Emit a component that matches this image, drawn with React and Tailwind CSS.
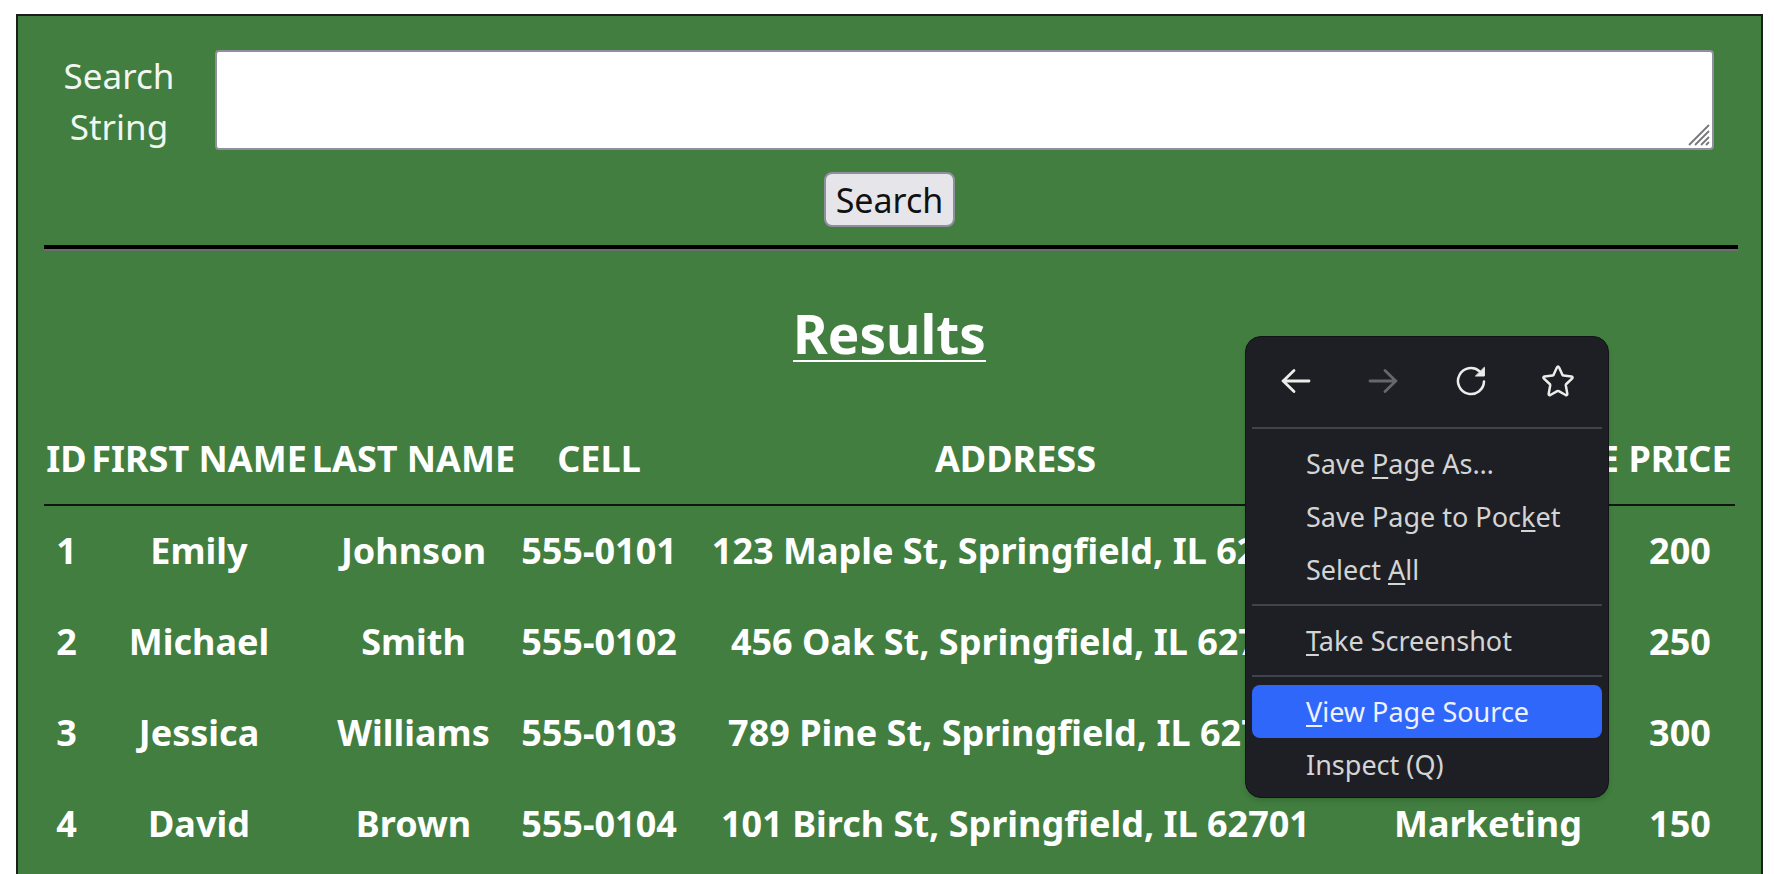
import React from "react";

const people = [
  { id: 1, first: "Emily", last: "Johnson", cell: "555-0101", address: "123 Maple St, Springfield, IL 62701", service: "Marketing", price: 200 },
  { id: 2, first: "Michael", last: "Smith", cell: "555-0102", address: "456 Oak St, Springfield, IL 62701", service: "Marketing", price: 250 },
  { id: 3, first: "Jessica", last: "Williams", cell: "555-0103", address: "789 Pine St, Springfield, IL 62701", service: "Marketing", price: 300 },
  { id: 4, first: "David", last: "Brown", cell: "555-0104", address: "101 Birch St, Springfield, IL 62701", service: "Marketing", price: 150 },
];

const headings = ["ID", "FIRST NAME", "LAST NAME", "CELL", "ADDRESS", "SERVICE NAME", "PRICE"];

const icon = "h-8 w-8 fill-none stroke-current";

function BackIcon() {
  return (
    <svg viewBox="0 0 32 32" className={icon} strokeWidth="2.8" strokeLinecap="round" strokeLinejoin="round" aria-hidden="true">
      <path d="M29 16H3M14 5.5L3.2 16L14 26.5" />
    </svg>
  );
}

function ForwardIcon() {
  return (
    <svg viewBox="0 0 32 32" className={icon} strokeWidth="2.8" strokeLinecap="round" strokeLinejoin="round" aria-hidden="true">
      <path d="M3 16H29M18 5.5L28.8 16L18 26.5" />
    </svg>
  );
}

function ReloadIcon() {
  return (
    <svg viewBox="0 0 32 32" className={icon} strokeWidth="2.5" strokeLinecap="round" aria-hidden="true">
      <path d="M24.5 6.2A13 13 0 1 0 29 16.4" />
      <path d="M29.4 2.6V11H20.8Z" className="fill-current" strokeWidth="1" strokeLinejoin="round" />
    </svg>
  );
}

function StarIcon() {
  return (
    <svg viewBox="0 0 32 32" className={icon} strokeWidth="2.5" strokeLinejoin="round" aria-hidden="true">
      <path d="M14.9 2.6Q16 0.6 17.1 2.6L20.4 9.8Q20.8 10.5 21.6 10.6L29.4 11.6Q31.4 12 30 13.6L24.3 19Q23.7 19.6 23.8 20.4L25.3 28.8Q25.4 30.8 23.6 30L16.8 26.2Q16 25.8 15.2 26.2L8.4 30Q6.6 30.8 6.7 28.8L8.2 20.4Q8.3 19.6 7.7 19L2 13.6Q0.6 12 2.6 11.6L10.4 10.6Q11.2 10.5 11.6 9.8Z" />
    </svg>
  );
}

function Key({ children }) {
  return <span className="underline decoration-2 underline-offset-[3px]">{children}</span>;
}

function MenuItem({ active, children }) {
  return (
    <button
      type="button"
      role="menuitem"
      className={
        active
          ? "block h-[53px] w-full rounded-lg bg-[#3067fb] pl-[54px] text-left text-[#eef2ff]"
          : "block h-[53px] w-full rounded-lg pl-[54px] text-left"
      }
    >
      {children}
    </button>
  );
}

function Divider() {
  return <div role="separator" className="my-2 h-[2px] bg-[#41434a]" />;
}

function ContextMenu() {
  return (
    <div
      role="menu"
      aria-label="Page menu"
      className="absolute top-[336px] right-[165px] w-[364px] rounded-2xl border border-[#121317] bg-[#1e1f25] p-[6px] text-[27px] leading-[53px] text-[#d3d4d4] shadow-md"
    >
      <div className="flex h-[76px] items-center justify-around text-[#ecedea]">
        <button type="button" aria-label="Back"><BackIcon /></button>
        <button type="button" aria-label="Forward" disabled className="text-[#66676a]"><ForwardIcon /></button>
        <button type="button" aria-label="Reload"><ReloadIcon /></button>
        <button type="button" aria-label="Bookmark"><StarIcon /></button>
      </div>
      <Divider />
      <MenuItem>Save <Key>P</Key>age As…</MenuItem>
      <MenuItem>Save Page to Poc<Key>k</Key>et</MenuItem>
      <MenuItem>Select <Key>A</Key>ll</MenuItem>
      <Divider />
      <MenuItem><Key>T</Key>ake Screenshot</MenuItem>
      <Divider />
      <MenuItem active><Key>V</Key>iew Page Source</MenuItem>
      <MenuItem>Inspect (Q)</MenuItem>
    </div>
  );
}

export default function App() {
  return (
    <div className="relative flex min-h-screen flex-col bg-white pt-[14px] pr-[11px] pl-4 font-['Noto_Sans',sans-serif] text-[36px] text-white">
      <main className="flex-1 border-2 border-b-0 border-[#1a1f1a] bg-[#417e3f] px-[26px] pt-[34px]">
        <form onSubmit={(e) => e.preventDefault()}>
          <div className="flex items-start pr-[21px]">
            <label htmlFor="search" className="mr-[21px] w-[150px] text-center text-[35px] leading-[51px] text-[#f1f6f1]">
              Search String
            </label>
            <div className="relative flex-1">
              <textarea
                id="search"
                className="block h-[100px] w-full resize-none rounded-sm border-2 border-[#8f8f9d] bg-white p-1 text-black outline-none"
              />
              <svg viewBox="0 0 22 22" className="pointer-events-none absolute right-1 bottom-1 h-[22px] w-[22px] stroke-[#77777c]" strokeWidth="1.8" aria-hidden="true">
                <path d="M1 21L21 1M7 21L21 7M13 21L21 13M18 21L21 18" />
              </svg>
            </div>
          </div>
          <div className="mt-[20px] flex justify-center">
            <button type="submit" className="h-[55px] rounded-lg border-2 border-[#8f8f9d] bg-[#e6e5ea] px-[10px] text-[34px] leading-[50px] text-[#111]">
              Search
            </button>
          </div>
        </form>
        <hr className="mt-[18px] -mr-[3px] h-[6px] border-0 border-b-2 border-[#6f6c6f] bg-black" />
        <h2 className="mt-[47px] text-center text-[53px] leading-[72px] font-bold underline decoration-2 underline-offset-[6px]">Results</h2>
        <table className="mt-[44px] w-full table-fixed border-collapse text-center font-bold whitespace-nowrap">
          <colgroup>
            <col className="w-[45px]" />
            <col className="w-[220px]" />
            <col className="w-[209px]" />
            <col className="w-[162px]" />
            <col />
            <col className="w-[274px]" />
            <col className="w-[110px]" />
          </colgroup>
          <thead>
            <tr className="h-[91px] border-b-2 border-[#101510]">
              {headings.map((h) => (
                <th key={h} scope="col" className="p-0 text-center">{h}</th>
              ))}
            </tr>
          </thead>
          <tbody>
            {people.map((p) => (
              <tr key={p.id} className="h-[91px]">
                <td>{p.id}</td>
                <td>{p.first}</td>
                <td>{p.last}</td>
                <td>{p.cell}</td>
                <td>{p.address}</td>
                <td>{p.service}</td>
                <td>{p.price}</td>
              </tr>
            ))}
          </tbody>
        </table>
      </main>
      <ContextMenu />
    </div>
  );
}
